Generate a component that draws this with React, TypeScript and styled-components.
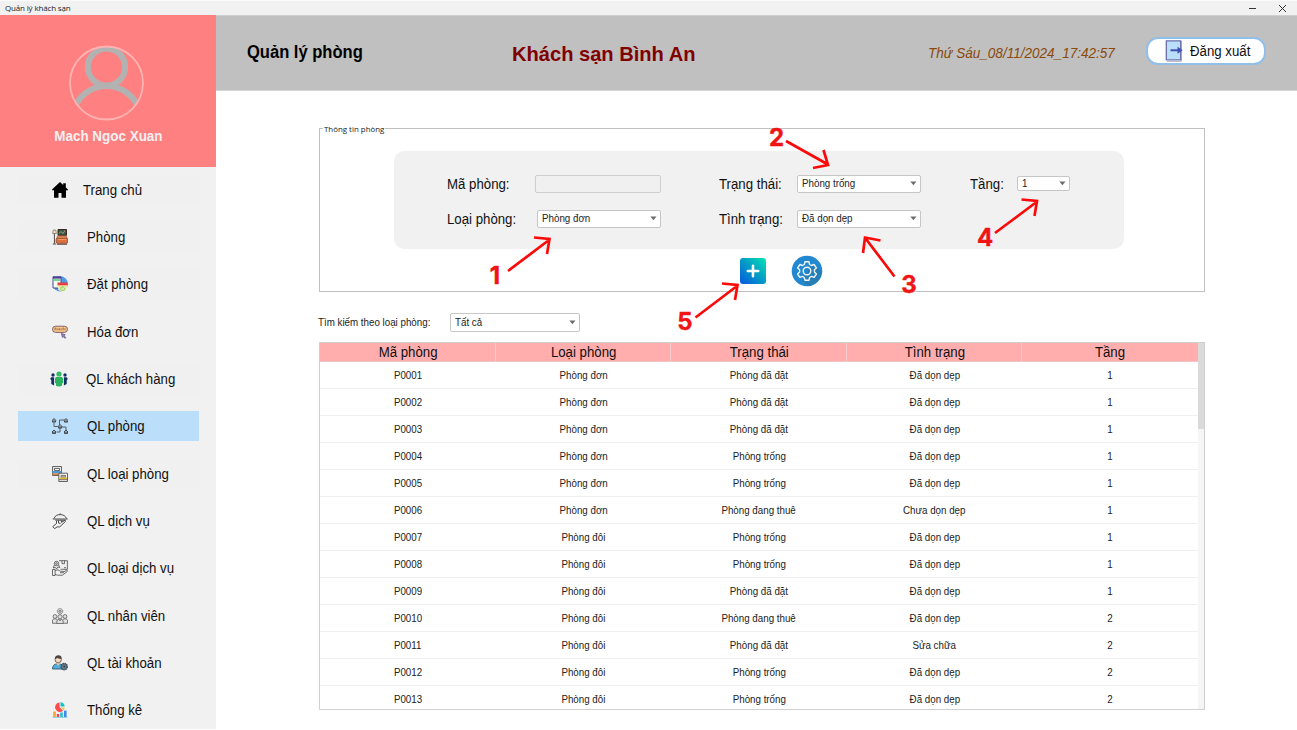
import React from 'react';
import styled, { createGlobalStyle } from 'styled-components';

const GlobalStyle = createGlobalStyle`
  *, *::before, *::after { box-sizing: border-box; }
  body { margin: 0; background: #fff; font-family: 'Liberation Sans', Arial, sans-serif; overflow: hidden; }
`;

const Text = styled.span<{ $size: number; $stretch?: number; $origin?: string; $color?: string; $bold?: boolean; $italic?: boolean }>`
  display: inline-block;
  white-space: pre;
  line-height: 1;
  font-size: ${(p) => p.$size}px;
  transform: scaleX(${(p) => p.$stretch ?? 1});
  transform-origin: ${(p) => p.$origin ?? 'left'} center;
  color: ${(p) => p.$color ?? '#101010'};
  font-weight: ${(p) => (p.$bold ? 700 : 400)};
  font-style: ${(p) => (p.$italic ? 'italic' : 'normal')};
`;

const Window = styled.div`
  position: relative;
  width: 1297px;
  height: 730px;
  display: flex;
  flex-direction: column;
`;

const TitleBar = styled.div`
  height: 15px;
  flex: none;
  display: flex;
  align-items: center;
  justify-content: space-between;
  padding: 0 10px 0 5px;
  background: #f1f1f1;
  border-top: 1px solid #fafafa;
  font-family: 'Open Sans', sans-serif;
`;

const WindowTitle = styled.span`
  font-size: 8px;
  line-height: 10px;
  letter-spacing: -0.16px;
  color: #222;
`;

const WindowButtons = styled.div`
  display: flex;
  gap: 21px;
`;

const Body = styled.div`
  display: flex;
  height: 714px;
`;

const Sidebar = styled.aside`
  width: 216px;
  flex: none;
  background: #f1f1f1;
`;

const Profile = styled.div`
  height: 152px;
  display: flex;
  flex-direction: column;
  align-items: center;
  padding: 30px 4px 0 0;
  background: #ff8080;
  gap: 8px;
`;

const ProfileName = styled(Text)`
  margin-left: 4px;
`;

const Menu = styled.nav`
  display: flex;
  flex-direction: column;
  gap: 17.3px;
  padding: 7.9px 17px 0 18px;
`;

const MenuItem = styled.div<{ $active?: boolean; $shade?: boolean; $indent?: number }>`
  height: 30px;
  flex: none;
  display: flex;
  align-items: center;
  padding-left: 34px;
  gap: ${(p) => 19 + (p.$indent ?? 0)}px;
  background: ${(p) => (p.$active ? '#bbdefb' : p.$shade ? '#f0f0f0' : 'transparent')};
`;

const WideMenuItem = styled(MenuItem)`
  padding-left: 32px;
  gap: 18px;
`;

const Main = styled.main`
  flex: 1;
  display: flex;
  flex-direction: column;
`;

const Header = styled.header`
  height: 76px;
  flex: none;
  display: grid;
  grid-template-columns: 265px 416px 218px auto;
  align-items: center;
  padding: 1px 0 1px 31px;
  background: #c0c0c0;
  border-top: 1px solid #cfcfcf;
  border-bottom: 1px solid #d5d5d5;
`;

const HotelName = styled(Text)`
  margin-top: 1px;
`;

const LogoutButton = styled.button`
  width: 120px;
  height: 28px;
  display: flex;
  align-items: center;
  gap: 6px;
  padding: 0 0 0 16px;
  margin-top: -5px;
  border: 2px solid #90bfea;
  border-radius: 12px;
  background: #fff;
  font-family: inherit;
`;

const Content = styled.div`
  display: flex;
  flex-direction: column;
  padding: 37px 92px 0 103px;
`;

const Fieldset = styled.section`
  height: 164px;
  border: 1px solid #c0c0c0;
  display: flex;
  flex-direction: column;
`;

const Legend = styled.div`
  align-self: flex-start;
  height: 12px;
  margin: -6px 0 16px 3px;
  padding: 0 1px;
  background: #fff;
  font: 7.9px/12px 'Open Sans', sans-serif;
  color: #222;
`;

const FormPanel = styled.div`
  width: 730px;
  height: 98px;
  flex: none;
  margin-left: 74px;
  padding: 15px 0 0 53px;
  border-radius: 10px;
  background: #f1f1f1;
  display: grid;
  grid-template-columns: 89px 183px 78px 173px 47px 53px;
  grid-template-rows: 35px 35px;
  align-items: center;
`;

const ReadonlyInput = styled.input`
  width: 126px;
  height: 18px;
  margin: 0 0 0 -1px;
  border: 1px solid #cfcfcf;
  border-radius: 2px;
  background: #f0f0f0;
`;

const Select = styled.div<{ $w: number; $h?: number; $offset?: number }>`
  width: ${(p) => p.$w}px;
  height: ${(p) => p.$h ?? 18}px;
  margin-left: ${(p) => p.$offset ?? 0}px;
  display: flex;
  align-items: center;
  justify-content: space-between;
  padding: 0 3px 0 4px;
  border: 1px solid #c6c6c6;
  border-radius: 2px;
  background: #fff;
`;

const FloorSelect = styled(Select)`
  margin-top: -1px;
`;

const Actions = styled.div`
  display: flex;
  align-items: center;
  gap: 25px;
  margin: 6px 0 0 420px;
`;

const SearchRow = styled.div`
  display: flex;
  align-items: center;
  justify-content: space-between;
  width: 262px;
  height: 19px;
  margin: 21px 0 10px -1px;
`;

const Table = styled.div`
  height: 368px;
  display: flex;
  border: 1px solid #d0d0d0;
  overflow: hidden;
`;

const Grid = styled.div`
  flex: 1;
  display: flex;
  flex-direction: column;
`;

const Row = styled.div`
  height: 27px;
  flex: none;
  display: grid;
  grid-template-columns: repeat(5, 1fr);
  align-items: center;
  justify-items: center;
  border-bottom: 1px solid #f0f0f0;
`;

const HeadRow = styled(Row)`
  height: 19px;
  background: #ffadad;
  border-bottom: 1px solid #f6c4c4;
`;

const HeadCell = styled.div`
  width: 100%;
  height: 18px;
  display: flex;
  align-items: center;
  justify-content: center;
  padding-left: 1.5px;
  border-right: 1px solid #f8cccc;
  &:last-child { border-right: 0; padding-left: 0; }
`;

const ScrollTrack = styled.div`
  width: 6px;
  background: #f5f5f5;
`;

const ScrollThumb = styled.div`
  height: 86px;
  background: #dadada;
`;

const Annotations = styled.svg`
  position: absolute;
  inset: 0;
  pointer-events: none;
`;

const Caret = () => (
  <svg width="7" height="5" viewBox="0 0 7 5"><path d="M0.3 0.6h6.2L3.4 4.3z" fill="#6e6e6e" /></svg>
);

const Icon = ({ children }: { children: React.ReactNode }) => (
  <svg width="16" height="16" viewBox="0 0 16 16" fill="none">{children}</svg>
);

const HomeIcon = () => (
  <Icon>
    <path d="M8 0 0 7.6l.9 1.2L2 8V15.800h4.500v-4.800h3v4.800H14V8l1.100.8.9-1.200-2.200-2.100V1.300h-2.600v1.800z" fill="#000" />
  </Icon>
);
const RoomIcon = () => (
  <Icon>
    <path d="M.6 4.5 1.3 1h2.4l.7 3.5z" fill="#f6dfb8" stroke="#65574b" strokeWidth=".6" />
    <path d="M2.4 4.5v10.2M.8 15h3.4" stroke="#4c4c4c" />
    <path d="M6 .5h8.5v5.8H6z" fill="#315b46" stroke="#3b2421" />
    <path d="m7 4.5 2-2 2 2 2-3" stroke="#d0a878" strokeWidth=".8" />
    <path d="M5 10V8.3c0-1 .7-1.500 1.500-1.500H13c1 0 1.700.6 1.700 1.500V10" fill="#ef8c58" stroke="#803c27" strokeWidth=".6" />
    <rect x="4" y="9.3" width="12" height="5" rx="1.4" fill="#dc713f" stroke="#743620" strokeWidth=".6" />
    <path d="M6 10.5h8" stroke="#f09a68" /><path d="M5 15.2h10" stroke="#563026" />
  </Icon>
);
const BookingIcon = () => (
  <Icon>
    <circle cx="8.3" cy="7.8" r="7.6" fill="#4e9bea" />
    <path d="M1 .7h8V12H1z" fill="#eefff0" stroke="#40398a" strokeWidth=".9" />
    <path d="M1 1h8v1.600H1z" fill="#4f3b91" />
    <path d="M2 3h6v2H2z" fill="#70d69a" />
    <path d="M5.5 9h10l-1 4.500-4 2.200-4-1.500z" fill="#f5e8b8" />
    <path d="M5.5 6.5h10v2.8h-10z" fill="#e93d45" />
    <circle cx="10.7" cy="12.5" r="2.6" fill="#a5dc6d" />
    <path d="m9.3 12.5 1 1 1.8-2" stroke="#fff" />
  </Icon>
);
const OrderIcon = () => (
  <Icon>
    <rect x=".5" y="2.2" width="15" height="6.2" rx="3.1" fill="#f8c786" stroke="#76546c" strokeWidth=".9" />
    <path d="M3 4.3v2M5 4.3v2M7 4.3v2M9 4.3v2M11 4.3v2M13 4.3v2M3 4.1h1M7 5.3h1M11 4.1h1" stroke="#80553e" strokeWidth=".8" />
    <path d="m9.3 9.4 4 1.3-1.2 1 1.7 1.9-.9.8-1.6-1.9-.9 1z" fill="#9b7fc0" stroke="#57426f" strokeWidth=".6" />
  </Icon>
);
const CustomersIcon = () => (
  <svg width="18" height="16" viewBox="0 0 18 16">
    <g fill="#122f66">
      <circle cx="3" cy="4" r="1.7" /><path d="M.3 8c0-1.300.9-1.800 1.800-1.800h2v8.400L1.300 13V9.200z" />
      <circle cx="15" cy="4" r="1.7" /><path d="M17.700 8c0-1.300-.9-1.800-1.800-1.800h-2v8.400l2.800-1.600V9.200z" />
    </g>
    <circle cx="9" cy="3" r="2.6" fill="#32bd65" />
    <path d="M5 8c0-1.500 1-2 2.200-2h3.600C12.100 6 13 6.600 13 8v4.300h-1v2.500c-1.800.8-4.200.8-6 0v-2.500H5z" fill="#2db35f" />
  </svg>
);
const NetworkIcon = () => (
  <Icon>
    <path d="M2 5v3.500h4M7.500 7V2h5M10 9h4v3M8 10v4H4.500" stroke="#4b5158" strokeWidth=".9" />
    {[[2, 2.5], [14, 2.5], [8, 8.5], [2, 14], [14, 14]].map(([x, y]) => (
      <g key={`${x}-${y}`} transform={`translate(${x} ${y})`}>
        <path d="M-1.500-.3v1.900h3V-.3L0-1.800z" fill="#9da5aa" />
        <path d="M-2 0 0-2 2 0M-1.500 0v1.600h3V0M0 0v1.300" stroke="#383e43" strokeWidth=".9" />
      </g>
    ))}
  </Icon>
);
const RoomTypeIcon = () => (
  <Icon>
    <path d="M.5.5h9v9h-9z" fill="#e8e8e8" stroke="#555" strokeWidth=".9" />
    <path d="M.5 5h9v2.200h-9z" fill="#4d9bd8" /><path d="M.5 7.200h9V9h-9z" fill="#d98348" />
    <path d="M2.500 2.500h5v2h-5z" fill="#fff" stroke="#444" strokeWidth=".8" />
    <path d="M6.800 7.200h8.700v8.300H6.800z" fill="#f5f3ed" stroke="#555" strokeWidth=".9" />
    <path d="M7 11.400h8v2H7z" fill="#e5ba38" /><path d="M9 9.400h4.500v1.500H9z" stroke="#555" strokeWidth=".8" />
    <path d="M7 13.700h8.500" stroke="#555" strokeWidth=".8" />
  </Icon>
);
const ServiceIcon = () => (
  <Icon>
    <g stroke="#3a3a3a" strokeWidth=".9" strokeLinejoin="round">
      <path d="M2 5.500C3 2.700 5.200 1.600 8.200 1.600s5.300 1.300 6.300 3.900M.7 6h15M8.200.4v1.200M3.300 7.200h10.500" />
      <path d="M4.500 8v2.500l-3.700 3 1.800 2.200 2.500-1.800h2.600l5.800-5.500-.8-1-3.300 2V7.500M6.500 7.500V10l2 .5" />
    </g>
  </Icon>
);
const ServiceTypeIcon = () => (
  <Icon>
    <g stroke="#4a4a4a" strokeWidth=".8" strokeLinejoin="round">
      <path d="M7 .7h8.400v8.600H8.500M10 .7v3h2.500v-3M12 7.700h2" />
      <circle cx="4.500" cy="3.500" r="2.200" /><circle cx="4.500" cy="3.500" r=".8" />
      <path d="m2.300 5-1 3 2-.7L4.500 9l1.300-2 2 .5L6.600 5M.5 9.500h2.600v6H.5zM3.100 10.500 6 9.800l2.400 1.500H11c1 .2.900 1.400 0 1.400H8M11.500 12l3-1.700c1-.3 1.300.8.6 1.300l-4.700 3.600H5.500l-2.400-.8" />
    </g>
  </Icon>
);
const StaffIcon = () => (
  <Icon>
    <g stroke="#5c5c5c" strokeWidth=".8" fill="#e2e2e2">
      <circle cx="8" cy="3.300" r="2.700" strokeDasharray="1.300 .4" /><circle cx="8" cy="3.300" r="1.100" />
      <circle cx="3" cy="8.500" r="1.900" /><circle cx="13" cy="8.500" r="1.900" />
      <path d="M.5 15.300v-2.500c0-1.500 1-2 2.500-2s2.500.5 2.500 2v2.500zM10.500 15.300v-2.500c0-1.500 1-2 2.500-2s2.500.5 2.500 2v2.500z" />
      <circle cx="8" cy="8.800" r="2.100" />
      <path d="M4.800 15.500V14c0-1.800 1.200-2.700 3.200-2.700s3.200.9 3.200 2.700v1.500z" /><path d="m7 11.400 1 1.500 1-1.500" />
    </g>
  </Icon>
);
const AccountIcon = () => (
  <Icon>
    <path d="M.5 14c0-3.300 1.600-4.800 4-5.100h3.200c2.500.3 4 1.800 4 5.100z" fill="#4fb0df" stroke="#284a62" strokeWidth=".8" />
    <path d="M4.700 7.500h3v1.800l-1.500 1.300-1.500-1.300z" fill="#edc9a8" />
    <circle cx="6.200" cy="4.600" r="3.200" fill="#f5d8bd" stroke="#4b4137" strokeWidth=".7" />
    <path d="M2.900 4.300C2.600 1.500 4.200.3 6.500.3s3.500 1.600 3 3.700C7.500 4.100 6 3.500 5 2.800c-.3.700-1 1.400-2.100 1.500z" fill="#4a4540" />
    <circle cx="12.200" cy="11.600" r="3" fill="#75858f" stroke="#344c5b" strokeWidth="1.600" strokeDasharray="1.500 .5" />
    <circle cx="12.200" cy="11.600" r="1" fill="#293e4b" />
  </Icon>
);
const StatsIcon = () => (
  <Icon>
    <path d="M7.600 5.300V.6A4.700 4.700 0 1 0 11 8.700z" fill="#ff4b4b" />
    <path d="M8.500 4.500V.2c2.500.1 4 1.800 4.200 4.300z" fill="#16c1ca" /><path d="M9 5.400h3.700c0 1.200-.4 2.100-1.200 2.800z" fill="#ffc24b" />
    <path d="M1.200 9.500h2.600V15H1.200z" fill="#ff9f2e" /><path d="M4.800 12h2.500v3H4.800z" fill="#ef4452" />
    <path d="M8.200 10.500h2.600V15H8.200z" fill="#22bfcd" /><path d="M12 8.600h2.600V15H12z" fill="#408be5" />
    <path d="M.5 15.400h15" stroke="#6bc7df" strokeWidth=".8" />
  </Icon>
);

const Avatar = () => (
  <svg width="76" height="76" viewBox="0 0 76 76" fill="none">
    <defs><clipPath id="avatarClip"><circle cx="38.5" cy="38" r="36" /></clipPath></defs>
    <g clipPath="url(#avatarClip)" stroke="#b2b2b2">
      <circle cx="38.5" cy="22" r="18.600" strokeWidth="6" />
      <path d="M7 61.500A34.500 34.500 0 0 1 70 61.500" strokeWidth="6" />
    </g>
    <circle cx="38.5" cy="38" r="36.500" stroke="#ffb3b3" strokeWidth="1.800" />
  </svg>
);

const LogoutIcon = () => (
  <svg width="20" height="24" viewBox="0 0 20 24" fill="none">
    <path d="M3 22.500h14.500V2" stroke="#c3bfc8" />
    <path d="M2.300 1.800h14.400v19H2.300z" fill="#bbdefb" stroke="#6a70ae" strokeWidth="1.300" />
    <path d="M6.500 11.300h8.500" stroke="#3f51b5" strokeWidth="2" /><path d="m13.500 7.800 5.200 3.500-5.200 3.500z" fill="#3f51b5" />
  </svg>
);

const AddIcon = () => (
  <svg width="26" height="26" viewBox="0 0 26 26">
    <defs><linearGradient id="addFill" x1="0" y1="1" x2="1" y2="0"><stop offset="0" stopColor="#0757e0" /><stop offset=".5" stopColor="#049ac7" /><stop offset="1" stopColor="#02e5b4" /></linearGradient></defs>
    <rect width="26" height="26" rx="3" fill="url(#addFill)" />
    <path d="M13 7.800v10.400M7.800 13h10.400" stroke="#fff" strokeWidth="2.600" strokeLinecap="round" />
  </svg>
);

const GearIcon = () => (
  <svg width="32" height="32" viewBox="0 0 32 32" fill="none">
    <circle cx="16" cy="16" r="15.300" fill="#2388d0" />
    <path d="m21.500 8.500 8.800 8.500A15.300 15.300 0 0 1 17 31.300l-6-6z" fill="#277eb5" />
    <g stroke="#f0f7fc" strokeWidth="1.400" strokeLinejoin="round">
      <path d="M14 6.800h4l.6 2.700 1.900 1 2.500-1 2.400 3.400-2 1.800v2.400l2 1.900-2.300 3.400-2.600-1-1.900 1.100-.6 2.700h-4l-.7-2.700-1.900-1.100-2.600 1L6.600 19l2-1.900v-2.400l-2-1.800L9 9.500l2.500 1 1.800-1z" />
      <circle cx="16" cy="16" r="3.800" />
    </g>
  </svg>
);

const menu = [
  { label: 'Trang chủ', icon: <HomeIcon />, shade: true, indent: -4 },
  { label: 'Phòng', icon: <RoomIcon />, shade: true },
  { label: 'Đặt phòng', icon: <BookingIcon />, shade: true },
  { label: 'Hóa đơn', icon: <OrderIcon /> },
  { label: 'QL khách hàng', icon: <CustomersIcon />, shade: true, wide: true },
  { label: 'QL phòng', icon: <NetworkIcon />, active: true },
  { label: 'QL loại phòng', icon: <RoomTypeIcon />, shade: true },
  { label: 'QL dịch vụ', icon: <ServiceIcon /> },
  { label: 'QL loại dịch vụ', icon: <ServiceTypeIcon /> },
  { label: 'QL nhân viên', icon: <StaffIcon /> },
  { label: 'QL tài khoản', icon: <AccountIcon /> },
  { label: 'Thống kê', icon: <StatsIcon /> },
];

const columns = ['Mã phòng', 'Loại phòng', 'Trạng thái', 'Tình trạng', 'Tầng'];
const rows = [
  ['P0001', 'Phòng đơn', 'Phòng đã đặt', 'Đã dọn dẹp', '1'],
  ['P0002', 'Phòng đơn', 'Phòng đã đặt', 'Đã dọn dẹp', '1'],
  ['P0003', 'Phòng đơn', 'Phòng đã đặt', 'Đã dọn dẹp', '1'],
  ['P0004', 'Phòng đơn', 'Phòng trống', 'Đã dọn dẹp', '1'],
  ['P0005', 'Phòng đơn', 'Phòng trống', 'Đã dọn dẹp', '1'],
  ['P0006', 'Phòng đơn', 'Phòng đang thuê', 'Chưa dọn dẹp', '1'],
  ['P0007', 'Phòng đôi', 'Phòng trống', 'Đã dọn dẹp', '1'],
  ['P0008', 'Phòng đôi', 'Phòng trống', 'Đã dọn dẹp', '1'],
  ['P0009', 'Phòng đôi', 'Phòng đã đặt', 'Đã dọn dẹp', '1'],
  ['P0010', 'Phòng đôi', 'Phòng đang thuê', 'Đã dọn dẹp', '2'],
  ['P0011', 'Phòng đôi', 'Phòng đã đặt', 'Sửa chữa', '2'],
  ['P0012', 'Phòng đôi', 'Phòng trống', 'Đã dọn dẹp', '2'],
  ['P0013', 'Phòng đôi', 'Phòng trống', 'Đã dọn dẹp', '2'],
];

type CopyProps = { children: string; centered?: boolean };
const ValueText = styled(Text)`
  line-height: 12px;
  padding-top: 1px;
`;
const Label = ({ children, centered }: CopyProps) => (
  <Text $size={14} $stretch={0.945} $origin={centered ? 'center' : 'left'}>{children}</Text>
);
const Value = ({ children, centered }: CopyProps) => (
  <ValueText $size={10.4} $stretch={0.94} $origin={centered ? 'center' : 'left'} $color="#222">{children}</ValueText>
);

export default function App() {
  return (
    <Window>
      <GlobalStyle />
      <TitleBar>
        <WindowTitle>Quản lý khách sạn</WindowTitle>
        <WindowButtons>
          <svg width="9" height="9" viewBox="0 0 9 9"><path d="M1 4.500h7" stroke="#333" /></svg>
          <svg width="9" height="9" viewBox="0 0 9 9"><path d="m1 1 7 7M8 1 1 8" stroke="#333" /></svg>
        </WindowButtons>
      </TitleBar>
      <Body>
        <Sidebar>
          <Profile>
            <Avatar />
            <ProfileName $size={14} $stretch={0.96} $origin="center" $bold $color="#f4f0f0">Mach Ngoc Xuan</ProfileName>
          </Profile>
          <Menu>
            {menu.map((m) => {
              const Item = m.wide ? WideMenuItem : MenuItem;
              return (
                <Item key={m.label} $active={m.active} $shade={m.shade} $indent={m.indent}>
                  {m.icon}
                  <Label>{m.label}</Label>
                </Item>
              );
            })}
          </Menu>
        </Sidebar>
        <Main>
          <Header>
            <Text $size={17.5} $stretch={0.945} $bold $color="#000">Quản lý phòng</Text>
            <HotelName $size={21} $stretch={0.957} $bold $color="#800000">Khách sạn Bình An</HotelName>
            <Text $size={14.2} $stretch={0.955} $italic $color="#8a4a0a">Thứ Sáu_08/11/2024_17:42:57</Text>
            <LogoutButton>
              <LogoutIcon />
              <Label>Đăng xuất</Label>
            </LogoutButton>
          </Header>
          <Content>
            <Fieldset>
              <Legend>Thông tin phòng</Legend>
              <FormPanel>
                <Label>Mã phòng:</Label>
                <ReadonlyInput readOnly />
                <Label>Trạng thái:</Label>
                <Select $w={124}><Value>Phòng trống</Value><Caret /></Select>
                <Label>Tầng:</Label>
                <FloorSelect $w={53} $h={15}><Value>1</Value><Caret /></FloorSelect>
                <Label>Loại phòng:</Label>
                <Select $w={124} $offset={1}><Value>Phòng đơn</Value><Caret /></Select>
                <Label>Tình trạng:</Label>
                <Select $w={124}><Value>Đã dọn dẹp</Value><Caret /></Select>
              </FormPanel>
              <Actions><AddIcon /><GearIcon /></Actions>
            </Fieldset>
            <SearchRow>
              <Value>Tìm kiếm theo loại phòng:</Value>
              <Select $w={130} $h={19}><Value>Tất cả</Value><Caret /></Select>
            </SearchRow>
            <Table>
              <Grid>
                <HeadRow>{columns.map((c) => <HeadCell key={c}><Label centered>{c}</Label></HeadCell>)}</HeadRow>
                {rows.map((r) => <Row key={r[0]}>{r.map((c, i) => <Value centered key={i}>{c}</Value>)}</Row>)}
              </Grid>
              <ScrollTrack><ScrollThumb /></ScrollTrack>
            </Table>
          </Content>
        </Main>
      </Body>
      <Annotations width="1297" height="730" viewBox="0 0 1297 730">
        <g stroke="#fb0a0a" strokeWidth="2.700" fill="none">
          <path d="M508 271 549 240M534 237.500l15.500 1.500-2.500 15" />
          <path d="M786 141 828 164.500M823.500 150l4.500 15-15 3" />
          <path d="M894.500 276.500 866 239M880.500 240.500l-15.500-3-2 15.500" />
          <path d="M995 233 1036.500 202M1021.500 199.500l15.500 1.500-2.500 15" />
          <path d="M695.500 317.500 737 286M722 283.500l15.500 1.500-2.500 15" />
        </g>
        <g fill="#f01414" stroke="#f01414" strokeWidth=".4" fontFamily="Inter, sans-serif" fontWeight="700" fontSize="24" textAnchor="middle">
          <text x="495" y="284">1</text>
          <text x="776.500" y="146">2</text>
          <text x="909" y="292.500">3</text>
          <text x="985" y="246">4</text>
          <text x="685" y="330">5</text>
        </g>
      </Annotations>
    </Window>
  );
}
